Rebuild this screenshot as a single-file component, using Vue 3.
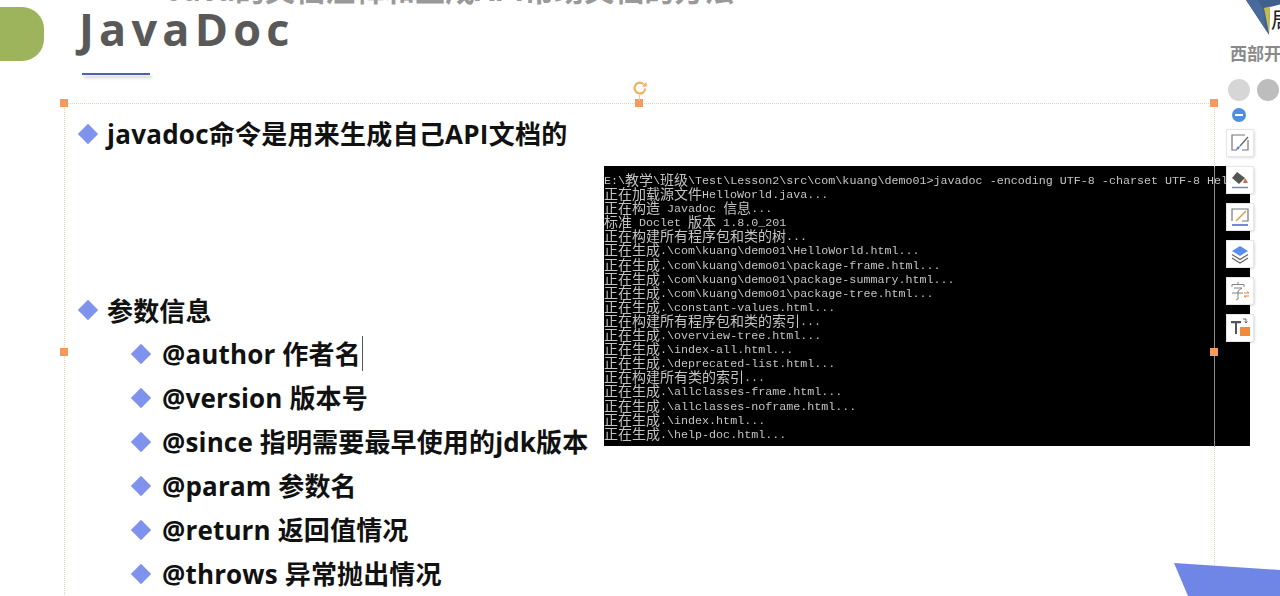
<script setup>
const raw = [
  'E:\\教学\\班级\\Test\\Lesson2\\src\\com\\kuang\\demo01>javadoc -encoding UTF-8 -charset UTF-8 HelloWorld.java',
  '正在加载源文件HelloWorld.java...',
  '正在构造 Javadoc 信息...',
  '标准 Doclet 版本 1.8.0_201',
  '正在构建所有程序包和类的树...',
  '正在生成.\\com\\kuang\\demo01\\HelloWorld.html...',
  '正在生成.\\com\\kuang\\demo01\\package-frame.html...',
  '正在生成.\\com\\kuang\\demo01\\package-summary.html...',
  '正在生成.\\com\\kuang\\demo01\\package-tree.html...',
  '正在生成.\\constant-values.html...',
  '正在构建所有程序包和类的索引...',
  '正在生成.\\overview-tree.html...',
  '正在生成.\\index-all.html...',
  '正在生成.\\deprecated-list.html...',
  '正在构建所有类的索引...',
  '正在生成.\\allclasses-frame.html...',
  '正在生成.\\allclasses-noframe.html...',
  '正在生成.\\index.html...',
  '正在生成.\\help-doc.html...'
]
// the console font's CJK cells are two Latin cells wide
const lines = raw.map(l =>
  l.split(/([\u4e00-\u9fff]+)/).filter(Boolean).map(t => ({ t, cjk: /[\u4e00-\u9fff]/.test(t) }))
)
const items = [
  { tag: '@author', text: '作者名', caret: true },
  { tag: '@version', text: '版本号' },
  { tag: '@since', text: '指明需要最早使用的jdk版本' },
  { tag: '@param', text: '参数名' },
  { tag: '@return', text: '返回值情况' },
  { tag: '@throws', text: '异常抛出情况' }
]
const handles = [
  [64, 103], [639, 103], [1214, 103], [64, 352], [1214, 352]
]
</script>

<template>
  <div class="slide">
    <div class="cut-title">Java的文档注释和生成API帮助文档的方法</div>
    <header class="head">
      <div class="pill"></div>
      <div class="title-wrap">
        <h1 class="title">JavaDoc</h1>
        <div class="rule"></div>
      </div>
    </header>

    <main class="body">
      <section class="left">
        <div class="row top"><i class="dia"></i><span>javadoc命令是用来生成自己API文档的</span></div>
        <div class="row group"><i class="dia"></i><span>参数信息</span></div>
        <ul class="sub">
          <li v-for="it in items" :key="it.tag" class="row">
            <i class="dia"></i>
            <span>{{ it.tag }} {{ it.text }}</span><b v-if="it.caret" class="caret"></b>
          </li>
        </ul>
      </section>
      <div class="term">
        <div v-for="(l, i) in lines" :key="i" class="ln"><span v-for="(p, j) in l" :key="j" class="seg" :class="{ cjk: p.cjk }">{{ p.t }}</span></div>
      </div>
    </main>

    <!-- selection frame -->
    <div class="frame"></div>
    <i v-for="(h, i) in handles" :key="i" class="handle" :style="{ left: h[0] + 'px', top: h[1] + 'px' }"></i>
    <svg class="rotate" width="16" height="16" viewBox="0 0 16 16">
      <path d="M13.300 8.500a5.400 5.400 0 1 1-1.800-4.400" fill="none" stroke="#f2ab55" stroke-width="2"/>
      <path d="M14.500 2v4.500H9.800z" fill="#f2ab55"/>
    </svg>
    <i class="stem"></i>

    <!-- logo -->
    <div class="logo">
      <svg class="mark" width="36" height="38" viewBox="0 0 36 38">
        <path d="M0 0H36V4L24 7 23 35z" fill="#3f5f8f"/>
        <path d="M18 8l6-1.500-1 27z" fill="#c4bd4e"/>
        <path d="M25 7h11v26H24z" fill="#fff"/>
        <path d="M0 0H12L17 9 20 30z" fill="#4a6a9c"/>
      </svg>
      <span class="glyph">局</span>
      <span class="logo-text">西部开源</span>
    </div>

    <!-- side tools -->
    <i class="dot d1"></i><i class="dot d2"></i>
    <i class="minus"></i>
    <div class="tools">
      <div class="tool">
        <svg width="22" height="22" viewBox="0 0 22 22"><path d="M16 3H3v15h5M19 8v10h-6" fill="none" stroke="#777" stroke-width="1.2"/><path d="M19 5L11 14" stroke="#666" stroke-width="1.3"/><path d="M8 15l3-1-1 3-3 1z" fill="#5b7fd8"/></svg>
      </div>
      <div class="tool">
        <svg width="22" height="22" viewBox="0 0 22 22"><path d="M8 3l8 6-6 6-7-6z" fill="#555"/><path d="M16 9l3 5h-5z" fill="#c0704a"/><path d="M3 18.500h16" stroke="#6b7fc4" stroke-width="1.400"/></svg>
      </div>
      <div class="tool">
        <svg width="22" height="22" viewBox="0 0 22 22"><path d="M3 15V3h16v12H13" fill="none" stroke="#777" stroke-width="1.200"/><path d="M17 5L7 15" stroke="#e8963a" stroke-width="1.500"/><path d="M3 19h16" stroke="#4a6fd0" stroke-width="1.600"/></svg>
      </div>
      <div class="tool">
        <svg width="22" height="22" viewBox="0 0 22 22"><path d="M11 3l8 5-8 5-8-5z" fill="#5b8def"/><path d="M3 11.500l8 5 8-5M3 15l8 5 8-5" fill="none" stroke="#666" stroke-width="1.300"/></svg>
      </div>
      <div class="tool">
        <svg width="22" height="22" viewBox="0 0 22 22"><path d="M9 2v2M3 7V4.500h12V7M5 8h8l-4 3M3 13h11M9 11v8l-2 1" fill="none" stroke="#777" stroke-width=".9"/><path d="M15 13h5l-2-1.500M20 16h-5l2 1.500" fill="none" stroke="#e8863a" stroke-width="1"/></svg>
      </div>
      <div class="tool">
        <svg width="22" height="22" viewBox="0 0 22 22"><path d="M2 4h10v2.200H8V17H6V6.200H2z" fill="#555"/><path d="M14 2h3v4m-1.500-1.500L17 6l1.500-1.500" fill="none" stroke="#666"/><rect x="11" y="10" width="10" height="9" fill="#f08a3c"/></svg>
      </div>
    </div>

    <div class="corner">
      <svg width="106" height="33" viewBox="0 0 106 33">
        <path d="M0 0L106 7V33H14z" fill="#7086e6"/>
      </svg>
    </div>
  </div>
</template>

<style>
html, body { margin: 0; background: #fff; }
</style>

<style scoped>
.slide {
  position: relative;
  width: 1280px;
  height: 596px;
  overflow: hidden;
  background: #fff;
  font-family: "Noto Sans", "Open Sans", "Noto Sans CJK SC", sans-serif;
}
.cut-title {
  position: absolute;
  left: 166px;
  top: -24px;
  font-size: 30px;
  line-height: 24px;
  font-weight: 700;
  color: #999;
  font-family: "Noto Sans CJK SC", sans-serif;
  white-space: nowrap;
}
.head { display: flex; align-items: flex-start; height: 98px; }
.pill { width: 44px; height: 54px; margin-top: 7px; background: #9db35c; border-radius: 0 22px 22px 0; flex: none; }
.title-wrap { margin-left: 34px; }
.title {
  margin: 4px 0 0 1px;
  font-family: "Open Sans", "Noto Sans", sans-serif;
  font-size: 45px;
  line-height: 50px;
  font-weight: 700;
  letter-spacing: 5.2px;
  color: #595959;
}
.rule { width: 68px; height: 2px; margin: 19px 0 0 4px; background: #4a63b8; box-shadow: 2px 3px 3px rgba(0,0,0,.2); }

.body { display: flex; align-items: flex-start; }
.left { width: 604px; flex: none; padding: 20px 0 0 78px; box-sizing: border-box; }
.row {
  display: flex;
  align-items: center;
  height: 44px;
  font-size: 26px;
  letter-spacing: .15px;
  font-weight: 700;
  color: #111;
  white-space: nowrap;
  font-family: "Open Sans", "Noto Sans CJK SC", sans-serif;
}
.row .dia { margin-right: 12px; }
.top { height: 30px; letter-spacing: .25px; }
.group { margin-top: 147px; height: 30px; }
.sub { list-style: none; margin: 6px 0 0; padding: 0 0 0 53px; }
.sub .dia { margin-right: 14px; }
.dia {
  width: 14px; height: 14px; flex: none;
  margin-left: 3px;
  background: #7f93ee;
  clip-path: polygon(50% 0, 100% 50%, 50% 100%, 0 50%);
  transform: translateY(1px) scale(1.45);
}
.group .dia { transform: scale(1.45); }
.caret { width: 1px; height: 35px; background: #555; margin-left: 1px; }
.term {
  width: 646px;
  height: 280px;
  margin: 68px 0 0;
  padding: 8px 0 0;
  box-sizing: border-box;
  background: #000;
  color: #c4c4c4;
  font-family: "Liberation Mono", "Noto Sans CJK SC", monospace;
  font-size: 11.700px;
  overflow: hidden;
  flex: none;
}
.ln { height: 14.100px; white-space: pre; filter: blur(.45px); }
.seg { display: inline-block; height: 14px; line-height: 14px; vertical-align: top; }
.cjk { font-family: "Noto Sans CJK SC", sans-serif; font-size: 14px; margin-top: -2px; }

.frame {
  position: absolute;
  left: 64px; top: 103px;
  width: 1151px; height: 520px;
  border: 1px dotted #e6d3b3;
  box-sizing: border-box;
  pointer-events: none;
}
/* the guide reads as a solid grey line where it crosses the dark and blue shapes */
.frame::after {
  content: "";
  position: absolute;
  right: -1px; top: 63px;
  width: 1px; height: 280px;
  background: #8c8c8c;
}
.frame::before {
  content: "";
  position: absolute;
  right: -1px; top: 465px;
  width: 1px; height: 30px;
  background: #a9b6ee;
}
.handle {
  position: absolute;
  width: 8px; height: 8px;
  margin: -4px 0 0 -4px;
  background: #f59a5c;
}
.stem { position: absolute; left: 639px; top: 95px; width: 1px; height: 6px; background: #e9c9a0; }
.rotate { position: absolute; left: 632px; top: 80px; }

.logo { position: absolute; left: 1230px; top: 0; width: 50px; height: 66px; overflow: hidden; }
.mark { position: absolute; left: 16px; top: 0; }
.glyph { position: absolute; left: 41px; top: 5px; font-size: 22px; line-height: 26px; color: #222; font-family: "Noto Sans CJK SC", sans-serif; }
.logo-text { position: absolute; left: 0; top: 43px; font-size: 17px; line-height: 20px; font-weight: 700; color: #8a8a8a; white-space: nowrap; font-family: "Noto Sans CJK SC", sans-serif; }

.dot { position: absolute; top: 79px; width: 22px; height: 22px; border-radius: 50%; }
.d1 { left: 1228px; background: #d6d6d6; }
.d2 { left: 1257px; background: #bdbdbd; }
.minus { position: absolute; left: 1232px; top: 108px; width: 14px; height: 14px; border-radius: 50%; background: #4f8fe0; }
.minus::after { content: ""; position: absolute; left: 3px; top: 6px; width: 8px; height: 2px; background: #fff; }

.tools { position: absolute; left: 1227px; top: 130px; display: flex; flex-direction: column; gap: 11px; }
.tool {
  width: 26px; height: 26px;
  background: #fff;
  box-shadow: 0 0 0 1px #e6e6e6, 1px 1px 3px rgba(0,0,0,.25);
  display: flex; align-items: center; justify-content: center;
}
.corner { position: absolute; left: 1174px; top: 563px; line-height: 0; }
</style>
